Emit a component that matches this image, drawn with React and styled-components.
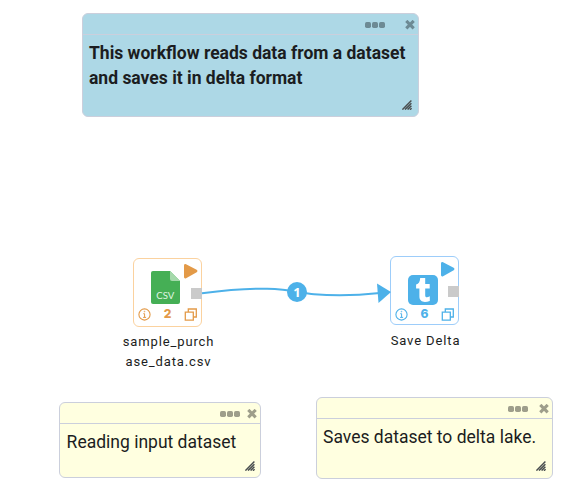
import React from "react";
import styled, { createGlobalStyle } from "styled-components";

const GlobalStyle = createGlobalStyle`
  body { margin: 0; background: #fff; font-family: Roboto, sans-serif; }
  * { box-sizing: border-box; }
`;

const Canvas = styled.main`
  position: relative;
  width: 567px;
  height: 496px;
  overflow: hidden;
  background: #fff;
`;

const NoteCard = styled.section`
  position: absolute;
  left: ${(p) => p.$x}px;
  top: ${(p) => p.$y}px;
  width: ${(p) => p.$w}px;
  height: ${(p) => p.$h}px;
  display: flex;
  flex-direction: column;
  border: 1px solid #cbcfdc;
  border-radius: 6px;
  background: ${(p) => p.$fill};
`;

const NoteHeader = styled.header`
  display: flex;
  flex: none;
  align-items: center;
  justify-content: flex-end;
  gap: ${(p) => p.$gap}px;
  height: 21px;
  padding: 2px 3px 0 0;
  border-bottom: 1px solid #cbcfdc;
  color: ${(p) => p.$color};
`;

const NoteText = styled.p`
  flex: 1;
  margin: 0;
  padding: 6px 0 0 ${(p) => p.$inset}px;
  color: #1b1d21;
  font-size: 17.5px;
  line-height: 25px;
  font-weight: ${(p) => (p.$bold ? 700 : 400)};
  white-space: pre-line;
`;

const Grip = styled.svg`
  align-self: flex-end;
  flex: none;
  margin: 0 ${(p) => p.$right}px ${(p) => p.$bottom}px 0;
`;

const NodeGroup = styled.div`
  position: absolute;
  left: ${(p) => p.$x}px;
  top: ${(p) => p.$y}px;
  width: 109px;
  display: flex;
  flex-direction: column;
  align-items: center;
`;

const NodeBox = styled.div`
  position: relative;
  width: 69px;
  height: 69px;
  display: flex;
  flex-direction: column;
  justify-content: flex-end;
  padding-bottom: ${(p) => p.$base}px;
  border: 1px solid ${(p) => p.$border};
  border-radius: 6px;
  background: #fff;
  color: ${(p) => p.$color};
`;

const NodeIcon = styled.div`
  display: flex;
  justify-content: center;
  padding: 0 4px ${(p) => p.$lift}px 0;
`;

const NodeFooter = styled.div`
  width: 100%;
  height: 14px;
  padding: 0 4px;
  display: flex;
  align-items: center;
  justify-content: space-between;
`;

const Count = styled.span`
  font: 800 12px/14px Inter, sans-serif;
`;

const PlayIcon = styled.svg`
  position: absolute;
  right: 3px;
  top: 4px;
`;

const Port = styled.span`
  position: absolute;
  right: -1px;
  top: 29px;
  width: 11px;
  height: 11px;
  background: #cacaca;
`;

const NodeLabel = styled.div`
  margin-top: ${(p) => p.$gap}px;
  padding-left: 2px;
  color: #1b1d21;
  font-size: 13px;
  line-height: 20px;
  letter-spacing: 0.88px;
  text-align: center;
  white-space: pre-line;
`;

const Edge = styled.svg`
  position: absolute;
  inset: 0;
  pointer-events: none;
`;

const EdgeBadge = styled.span`
  position: absolute;
  left: 287px;
  top: 282px;
  width: 20px;
  height: 20px;
  border-radius: 50%;
  background: #4db1e9;
  color: #fff;
  font: 700 13px/20px "Open Sans", sans-serif;
  text-align: center;
`;

function Note({ x, y, w, h, fill, color, gap, grip = [6, 6], inset = 6, bold, children }) {
  return (
    <NoteCard $x={x} $y={y} $w={w} $h={h} $fill={fill}>
      <NoteHeader $gap={gap} $color={color}>
        <svg width="20" height="6" fill="currentColor">
          <rect width="6" height="6" rx="1.7" />
          <rect x="7" width="6" height="6" rx="1.7" />
          <rect x="14" width="6" height="6" rx="1.7" />
        </svg>
        <svg width="10" height="10" viewBox="0 0 10 10">
          <path d="M1.3 .9 8.7 8.3M8.7 .9 1.3 8.3" stroke="currentColor" strokeWidth="3.1" />
        </svg>
      </NoteHeader>
      <NoteText $bold={bold} $inset={inset}>{children}</NoteText>
      <Grip $right={grip[0]} $bottom={grip[1]} width="10" height="10" viewBox="0 0 10 10">
        <path d="M.4 9.6 9.4.6M3 9.6l6.4-6.4M5.6 9.6l3.8-3.8M8 9.8l1.6-1.6" stroke="#4a4f50" strokeWidth="1.45" />
      </Grip>
    </NoteCard>
  );
}

function CsvIcon() {
  return (
    <svg width="29" height="33" viewBox="0 0 29 33">
      <path d="M2 0h17l10 10v21a2 2 0 0 1-2 2H2a2 2 0 0 1-2-2V2a2 2 0 0 1 2-2Z" fill="#45af55" />
      <path d="M19 0v8a2 2 0 0 0 2 2h8Z" fill="#a5d9ab" />
      <text x="14.3" y="28" textAnchor="middle" fill="#e0f5e3" fontFamily="Lato, sans-serif" fontSize="9.6" letterSpacing=".1">CSV</text>
    </svg>
  );
}

function DeltaIcon() {
  return (
    <svg width="30" height="30" viewBox="0 0 30 30">
      <rect width="30" height="30" rx="5" fill="#4db1e9" />
      <path d="M12.2 3h5v6h4.5v4.4h-4.5v6.8c0 2.3 1.6 2.7 4.6 1.1v4.6c-5.1 2.2-10.4 1.3-10.4-4.3v-8.2H8.1V9.6c2.7-.8 3.8-2.8 4.1-6.6Z" fill="#fff" />
    </svg>
  );
}

function Node({ x, y, color, border, count, gap, lift, base, icon, label }) {
  return (
    <NodeGroup $x={x} $y={y}>
      <NodeBox $color={color} $border={border} $base={base}>
        <PlayIcon width="15" height="17" viewBox="0 0 15 17">
          <path d="M2.4 2.4 13 8 2.4 14Z" fill="currentColor" stroke="currentColor" strokeWidth="2.8" strokeLinejoin="round" />
        </PlayIcon>
        <Port />
        <NodeIcon $lift={lift}>{icon}</NodeIcon>
        <NodeFooter>
          <svg width="13" height="13" viewBox="0 0 13 13" fill="none" stroke="currentColor">
            <circle cx="6.5" cy="6.5" r="5.6" strokeWidth="1.1" />
            <path d="M5.3 5.7h1.3v3.6M5.1 9.4h3" strokeWidth="1" />
            <circle cx="6.5" cy="3.6" r=".4" strokeWidth=".8" />
          </svg>
          <Count>{count}</Count>
          <svg width="13" height="13" viewBox="0 0 13 13" fill="none" stroke="currentColor" strokeWidth="1.3">
            <path d="M1.3 4.2h8v8h-8ZM4.3 4.2V1h8v8h-3" />
          </svg>
        </NodeFooter>
      </NodeBox>
      <NodeLabel $gap={gap}>{label}</NodeLabel>
    </NodeGroup>
  );
}

export default function App() {
  return (
    <>
      <GlobalStyle />
      <Canvas>
        <Note x={82} y={13} w={337} h={104} fill="#add8e6" color="#6d8a94" gap={20} bold>
          {"This workflow reads data from a dataset\nand saves it in delta format"}
        </Note>
        <Node x={113} y={258} color="#e39a48" border="#fbd29f" count="2" gap={5} lift={3} base={5} icon={<CsvIcon />} label={"sample_purch\nase_data.csv"} />
        <Node x={370} y={256} color="#4db1e9" border="#9dcdfa" count="6" gap={6} lift={2} base={3} icon={<DeltaIcon />} label="Save Delta" />
        <Edge width="567" height="496">
          <path d="M202 293.3C280 283 294 293 314 294.2Q344 297 380 293" fill="none" stroke="#4db1e9" strokeWidth="2" />
          <path d="M377 283.5 391 292 378.5 303Z" fill="#4db1e9" />
        </Edge>
        <EdgeBadge>1</EdgeBadge>
        <Note x={59} y={402} w={202} h={76} fill="#ffffe0" color="#9e9e8b" gap={7} grip={[5, 6]} inset={6.6}>
          Reading input dataset
        </Note>
        <Note x={316} y={397} w={237} h={82} fill="#ffffe0" color="#9e9e8b" gap={11} grip={[6, 7]}>
          Saves dataset to delta lake.
        </Note>
      </Canvas>
    </>
  );
}
